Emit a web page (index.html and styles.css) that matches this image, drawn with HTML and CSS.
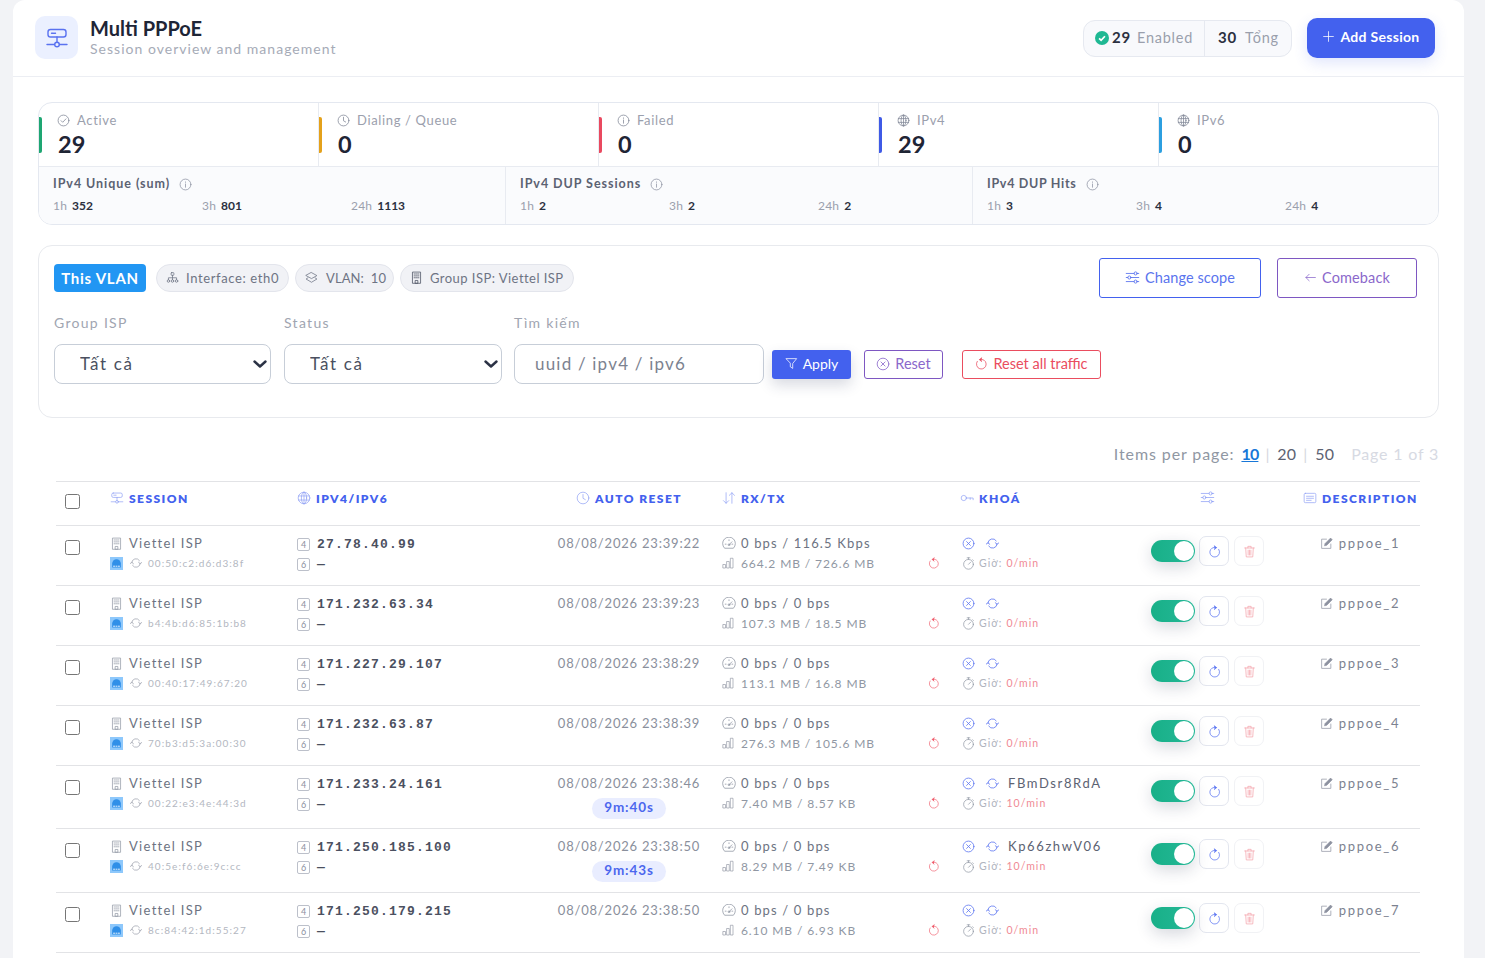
FILE: index.html
```html
<!DOCTYPE html>
<html>
<head>
	<meta charset="utf-8">
	<title>Multi PPPoE</title>
	<link rel="stylesheet" href="styles.css">
</head>
<body>
<svg class="sprite" xmlns="http://www.w3.org/2000/svg">
	<symbol id="i-net" viewBox="0 0 24 24"><rect x="3" y="3.5" width="18" height="7.5" rx="2.5"/><path d="M6.5 7.2h2M9.5 7.2h1M12 11v5M2 18.5h7.5M14.500 18.500H22"/><circle cx="12" cy="18.500" r="2.300"/></symbol>
	<symbol id="i-check" viewBox="0 0 24 24"><circle cx="12" cy="12" r="10"/><path d="M7.500 12.300l3 3 6-6.300"/></symbol>
	<symbol id="i-clock" viewBox="0 0 24 24"><circle cx="12" cy="12" r="10"/><path d="M12 6v6.500l4 2.300"/></symbol>
	<symbol id="i-info" viewBox="0 0 24 24"><circle cx="12" cy="12" r="10"/><path d="M12 11v6M12 7.200v.8"/></symbol>
	<symbol id="i-globe" viewBox="0 0 24 24"><circle cx="12" cy="12" r="10"/><ellipse cx="12" cy="12" rx="4.500" ry="10"/><path d="M2.500 8.500h19M2.500 15.500h19M12 2v20"/></symbol>
	<symbol id="i-x" viewBox="0 0 24 24"><circle cx="12" cy="12" r="10"/><path d="M8.500 8.500l7 7M15.500 8.500l-7 7"/></symbol>
	<symbol id="i-sync" viewBox="0 0 24 24"><path d="M3.500 11.500a8.500 8.500 0 0 1 15.500-4.300M20.500 12.500a8.500 8.500 0 0 1-15.500 4.300"/><path d="M17 10.500l3.500 3 3.500-3M0 13.500l3.500-3 3.500 3"/></symbol>
	<symbol id="i-sliders" viewBox="0 0 24 24"><path d="M2 5.500h12.500M19.500 5.500H22M2 12h2.500M9.500 12H22M2 18.500h12.500M19.500 18.500H22"/><circle cx="17" cy="5.500" r="2.500"/><circle cx="7" cy="12" r="2.500"/><circle cx="17" cy="18.500" r="2.500"/></symbol>
	<symbol id="i-back" viewBox="0 0 24 24"><path d="M21 12H3.500M9.500 6l-6 6 6 6"/></symbol>
	<symbol id="i-filter" viewBox="0 0 24 24"><path d="M2.500 3h19l-7.300 9v9l-4.400-3v-6z"/></symbol>
	<symbol id="i-rotate" viewBox="0 0 24 24"><path d="M8.500 4.700a9 9 0 1 1-4.300 3.300"/><path d="M12.500 1.500L8.300 4.800l3.700 3.700" fill="currentColor"/></symbol>
	<symbol id="i-redo" viewBox="0 0 24 24"><path d="M15.500 4.700a9 9 0 1 0 4.300 3.300"/><path d="M11.500 1.500l4.200 3.300-3.700 3.700" fill="currentColor"/></symbol>
	<symbol id="i-plus" viewBox="0 0 24 24"><path d="M12 3v18M3 12h18"/></symbol>
	<symbol id="i-build" viewBox="0 0 24 24"><path d="M4.500 22V2h15v20zM9.500 22v-4.500h5V22z"/><path d="M7.500 5.500h2M11 5.500h2M14.500 5.500h2M7.500 9h2M11 9h2M14.500 9h2M7.500 12.500h2M11 12.500h2M14.500 12.500h2"/></symbol>
	<symbol id="i-tree" viewBox="0 0 24 24"><rect x="9.500" y="3" width="5" height="5" rx="1"/><circle cx="4.500" cy="18.500" r="2.300"/><circle cx="12" cy="18.500" r="2.300"/><circle cx="19.500" cy="18.500" r="2.300"/><path d="M12 8v8M4.500 16v-3.500h15V16"/></symbol>
	<symbol id="i-layers" viewBox="0 0 24 24"><path d="M12 3l10 5.500-10 5.500L2 8.500z"/><path d="M5.500 12.500L2 14.800l10 6 10-6-3.500-2.300"/></symbol>
	<symbol id="i-sort" viewBox="0 0 24 24"><path d="M7 3v18M2.500 16.500L7 21l4.500-4.500M17 21V3M12.500 7.500L17 3l4.500 4.500"/></symbol>
	<symbol id="i-key" viewBox="0 0 24 24"><circle cx="6.500" cy="12" r="4.500"/><path d="M11 12h11.500v3M17.500 12v2.500"/></symbol>
	<symbol id="i-desc" viewBox="0 0 24 24"><rect x="2" y="4" width="20" height="16" rx="2"/><path d="M6 9h12M6 12.500h12M6 16h8"/></symbol>
	<symbol id="i-gauge" viewBox="0 0 24 20"><path d="M4 18.500a11 11 0 1 1 16 0z"/><path d="M12 13l5-5M5.500 12H7M17 12h1.500M12 4.500V6"/><circle cx="12" cy="13" r="1.500"/></symbol>
	<symbol id="i-bars" viewBox="0 0 24 24"><rect x="2.500" y="15" width="4.500" height="7"/><rect x="10" y="9" width="4.500" height="13"/><rect x="17.500" y="2.500" width="4.500" height="19.500"/></symbol>
	<symbol id="i-timer" viewBox="0 0 24 24"><circle cx="12" cy="13.500" r="9"/><path d="M12 13.500l4-4M9.500 1.500h5M12 1.500v3M19.500 5l1.500 1.500"/></symbol>
	<symbol id="i-trash" viewBox="0 0 24 24"><path d="M3 5.500h18M9 5.500V2.500h6v3M5 5.500l1 16.500h12l1-16.500M9.500 9.500v9M12 9.500v9M14.500 9.500v9"/></symbol>
	<symbol id="i-edit" viewBox="0 0 24 24"><path d="M20 13v8H3V4h9"/><path d="M8.500 15.500l1-3.500L19.500 2l3 3-10 10z" fill="currentColor"/></symbol>
	<symbol id="i-eth" viewBox="0 0 24 24"><rect class="eth-bg" x="0" y="0" width="24" height="24"/><path class="eth-fg" d="M4 19.500V12a8 8 0 0 1 16 0v7.500z"/><path class="eth-dot" d="M6.500 17h2M11 17h2M15.500 17h2"/></symbol>
	<symbol id="i-chev" viewBox="0 0 14 8"><path d="M1.500 1.500L7 6.500l5.500-5"/></symbol>
</svg>

<div class="page">
	<div class="topbar">
		<div class="brand">
			<div class="brand-icon"><svg class="ic ic-brand"><use href="#i-net"/></svg></div>
			<div>
				<div class="brand-title">Multi PPPoE</div>
				<div class="brand-sub">Session overview and management</div>
			</div>
		</div>
		<div class="top-actions">
			<div class="counter">
				<div class="counter-item">
					<span class="ok-dot"><svg viewBox="0 0 24 24"><path d="M7 12.500l3.500 3.500 6.500-7"/></svg></span>
					<b>29</b><span class="counter-label counter-enabled">Enabled</span>
				</div>
				<div class="counter-item counter-total"><b>30</b><span class="counter-label">Tổng</span></div>
			</div>
			<button class="btn-add"><svg class="ic ic-13"><use href="#i-plus"/></svg>Add Session</button>
		</div>
	</div>

	<div class="content">
		<div class="stats">
			<div class="stat-row">
				<div class="stat stat-green">
					<div class="stat-label"><svg class="ic ic-13"><use href="#i-check"/></svg>Active</div>
					<div class="stat-value">29</div>
				</div>
				<div class="stat stat-amber">
					<div class="stat-label"><svg class="ic ic-13"><use href="#i-clock"/></svg>Dialing / Queue</div>
					<div class="stat-value">0</div>
				</div>
				<div class="stat stat-red">
					<div class="stat-label"><svg class="ic ic-13"><use href="#i-info"/></svg>Failed</div>
					<div class="stat-value">0</div>
				</div>
				<div class="stat stat-blue">
					<div class="stat-label"><svg class="ic ic-13"><use href="#i-globe"/></svg>IPv4</div>
					<div class="stat-value">29</div>
				</div>
				<div class="stat stat-sky">
					<div class="stat-label"><svg class="ic ic-13"><use href="#i-globe"/></svg>IPv6</div>
					<div class="stat-value">0</div>
				</div>
			</div>
			<div class="dup-row">
				<div class="dup">
					<div class="dup-title">IPv4 Unique (sum)<svg class="ic ic-13"><use href="#i-info"/></svg></div>
					<div class="dup-vals">
						<span>1h<b>352</b></span><span>3h<b>801</b></span><span>24h<b>1113</b></span>
					</div>
				</div>
				<div class="dup">
					<div class="dup-title">IPv4 DUP Sessions<svg class="ic ic-13"><use href="#i-info"/></svg></div>
					<div class="dup-vals">
						<span>1h<b>2</b></span><span>3h<b>2</b></span><span>24h<b>2</b></span>
					</div>
				</div>
				<div class="dup">
					<div class="dup-title dup-hits">IPv4 DUP Hits<svg class="ic ic-13"><use href="#i-info"/></svg></div>
					<div class="dup-vals">
						<span>1h<b>3</b></span><span>3h<b>4</b></span><span>24h<b>4</b></span>
					</div>
				</div>
			</div>
		</div>

		<div class="filter">
			<div class="filter-top">
				<div class="chips">
					<span class="tag">This VLAN</span>
					<span class="chip chip-if"><svg class="ic ic-13"><use href="#i-tree"/></svg>Interface: eth0</span>
					<span class="chip chip-vlan"><svg class="ic ic-13"><use href="#i-layers"/></svg>VLAN:&nbsp; 10</span>
					<span class="chip chip-isp"><svg class="ic ic-13 ic-dark"><use href="#i-build"/></svg>Group ISP: Viettel ISP</span>
				</div>
				<div class="scope-btns">
					<button class="btn-line btn-scope"><svg class="ic ic-15"><use href="#i-sliders"/></svg>Change scope</button>
					<button class="btn-line btn-back"><svg class="ic ic-13"><use href="#i-back"/></svg>Comeback</button>
				</div>
			</div>
			<div class="filter-fields">
				<label class="field field-isp"><div class="field-label">Group ISP</div>
					<div class="select-wrap"><select><option>Tất cả</option></select><svg class="chev"><use href="#i-chev"/></svg></div>
				</label>
				<label class="field field-status"><div class="field-label">Status</div>
					<div class="select-wrap"><select><option>Tất cả</option></select><svg class="chev"><use href="#i-chev"/></svg></div>
				</label>
				<label class="field field-search"><div class="field-label">Tìm kiếm</div>
					<input type="text" placeholder="uuid / ipv4 / ipv6">
				</label>
				<button class="btn-apply"><svg class="ic ic-13"><use href="#i-filter"/></svg>Apply</button>
				<button class="btn-small btn-reset"><svg class="ic ic-14"><use href="#i-x"/></svg>Reset</button>
				<button class="btn-small btn-traffic"><svg class="ic ic-13"><use href="#i-rotate"/></svg>Reset all traffic</button>
			</div>
		</div>

		<div class="pager">
			<span>Items per page:</span><a class="pager-on">10</a><i>|</i><a>20</a><i>|</i><a>50</a><span class="pager-page">Page 1 of 3</span>
		</div>

		<table class="sessions">
			<colgroup>
				<col class="c-check"><col class="c-session"><col class="c-ip"><col class="c-reset"><col class="c-rate"><col class="c-key"><col class="c-act"><col class="c-desc">
			</colgroup>
			<thead>
				<tr>
					<th class="cell-check"><input type="checkbox"></th>
					<th class="th-session"><svg class="ic ic-14"><use href="#i-net"/></svg>Session</th>
					<th class="th-ip"><svg class="ic ic-14"><use href="#i-globe"/></svg>IPv4/IPv6</th>
					<th class="th-reset"><svg class="ic ic-14"><use href="#i-clock"/></svg>Auto reset</th>
					<th class="th-rate"><svg class="ic ic-14"><use href="#i-sort"/></svg>RX/TX</th>
					<th class="th-key"><svg class="ic ic-14"><use href="#i-key"/></svg>Khoá</th>
					<th class="th-act"><svg class="ic ic-15"><use href="#i-sliders"/></svg></th>
					<th class="th-desc"><svg class="ic ic-14"><use href="#i-desc"/></svg>Description</th>
				</tr>
			</thead>
			<tbody>
				<tr>
					<td class="cell-check"><input type="checkbox"></td>
					<td class="td-session"><div class="line isp"><svg class="ic ic-13"><use href="#i-build"/></svg>Viettel ISP</div><div class="line mac"><svg class="ic ic-13 eth"><use href="#i-eth"/></svg><svg class="ic ic-12"><use href="#i-sync"/></svg>00:50:c2:d6:d3:8f</div></td>
					<td class="td-ip"><div class="line ip"><span class="num">4</span>27.78.40.99</div><div class="line ip"><span class="num">6</span>—</div></td>
					<td class="td-reset"><div class="line">08/08/2026 23:39:22</div></td>
					<td class="td-rate"><div class="line"><svg class="ic ic-gauge"><use href="#i-gauge"/></svg>0 bps / 116.5 Kbps</div><div class="line line-sub"><svg class="ic ic-12"><use href="#i-bars"/></svg>664.2 MB / 726.6 MB<svg class="ic ic-12 ic-red"><use href="#i-rotate"/></svg></div></td>
					<td class="td-key"><div class="line"><svg class="ic ic-13 ic-blue"><use href="#i-x"/></svg><svg class="ic ic-13 ic-blue"><use href="#i-sync"/></svg></div><div class="line rate"><svg class="ic ic-13"><use href="#i-timer"/></svg>Giờ:<em>0/min</em></div></td>
					<td class="td-act"><div class="act"><span class="toggle"></span><span class="act-btn"><svg class="ic ic-13"><use href="#i-redo"/></svg></span><span class="act-btn act-del"><svg class="ic ic-13"><use href="#i-trash"/></svg></span></div></td>
					<td class="td-desc"><div class="line"><svg class="ic ic-13"><use href="#i-edit"/></svg>pppoe_1</div></td>
				</tr>
				<tr>
					<td class="cell-check"><input type="checkbox"></td>
					<td class="td-session"><div class="line isp"><svg class="ic ic-13"><use href="#i-build"/></svg>Viettel ISP</div><div class="line mac"><svg class="ic ic-13 eth"><use href="#i-eth"/></svg><svg class="ic ic-12"><use href="#i-sync"/></svg>b4:4b:d6:85:1b:b8</div></td>
					<td class="td-ip"><div class="line ip"><span class="num">4</span>171.232.63.34</div><div class="line ip"><span class="num">6</span>—</div></td>
					<td class="td-reset"><div class="line">08/08/2026 23:39:23</div></td>
					<td class="td-rate"><div class="line"><svg class="ic ic-gauge"><use href="#i-gauge"/></svg>0 bps / 0 bps</div><div class="line line-sub"><svg class="ic ic-12"><use href="#i-bars"/></svg>107.3 MB / 18.5 MB<svg class="ic ic-12 ic-red"><use href="#i-rotate"/></svg></div></td>
					<td class="td-key"><div class="line"><svg class="ic ic-13 ic-blue"><use href="#i-x"/></svg><svg class="ic ic-13 ic-blue"><use href="#i-sync"/></svg></div><div class="line rate"><svg class="ic ic-13"><use href="#i-timer"/></svg>Giờ:<em>0/min</em></div></td>
					<td class="td-act"><div class="act"><span class="toggle"></span><span class="act-btn"><svg class="ic ic-13"><use href="#i-redo"/></svg></span><span class="act-btn act-del"><svg class="ic ic-13"><use href="#i-trash"/></svg></span></div></td>
					<td class="td-desc"><div class="line"><svg class="ic ic-13"><use href="#i-edit"/></svg>pppoe_2</div></td>
				</tr>
				<tr>
					<td class="cell-check"><input type="checkbox"></td>
					<td class="td-session"><div class="line isp"><svg class="ic ic-13"><use href="#i-build"/></svg>Viettel ISP</div><div class="line mac"><svg class="ic ic-13 eth"><use href="#i-eth"/></svg><svg class="ic ic-12"><use href="#i-sync"/></svg>00:40:17:49:67:20</div></td>
					<td class="td-ip"><div class="line ip"><span class="num">4</span>171.227.29.107</div><div class="line ip"><span class="num">6</span>—</div></td>
					<td class="td-reset"><div class="line">08/08/2026 23:38:29</div></td>
					<td class="td-rate"><div class="line"><svg class="ic ic-gauge"><use href="#i-gauge"/></svg>0 bps / 0 bps</div><div class="line line-sub"><svg class="ic ic-12"><use href="#i-bars"/></svg>113.1 MB / 16.8 MB<svg class="ic ic-12 ic-red"><use href="#i-rotate"/></svg></div></td>
					<td class="td-key"><div class="line"><svg class="ic ic-13 ic-blue"><use href="#i-x"/></svg><svg class="ic ic-13 ic-blue"><use href="#i-sync"/></svg></div><div class="line rate"><svg class="ic ic-13"><use href="#i-timer"/></svg>Giờ:<em>0/min</em></div></td>
					<td class="td-act"><div class="act"><span class="toggle"></span><span class="act-btn"><svg class="ic ic-13"><use href="#i-redo"/></svg></span><span class="act-btn act-del"><svg class="ic ic-13"><use href="#i-trash"/></svg></span></div></td>
					<td class="td-desc"><div class="line"><svg class="ic ic-13"><use href="#i-edit"/></svg>pppoe_3</div></td>
				</tr>
				<tr>
					<td class="cell-check"><input type="checkbox"></td>
					<td class="td-session"><div class="line isp"><svg class="ic ic-13"><use href="#i-build"/></svg>Viettel ISP</div><div class="line mac"><svg class="ic ic-13 eth"><use href="#i-eth"/></svg><svg class="ic ic-12"><use href="#i-sync"/></svg>70:b3:d5:3a:00:30</div></td>
					<td class="td-ip"><div class="line ip"><span class="num">4</span>171.232.63.87</div><div class="line ip"><span class="num">6</span>—</div></td>
					<td class="td-reset"><div class="line">08/08/2026 23:38:39</div></td>
					<td class="td-rate"><div class="line"><svg class="ic ic-gauge"><use href="#i-gauge"/></svg>0 bps / 0 bps</div><div class="line line-sub"><svg class="ic ic-12"><use href="#i-bars"/></svg>276.3 MB / 105.6 MB<svg class="ic ic-12 ic-red"><use href="#i-rotate"/></svg></div></td>
					<td class="td-key"><div class="line"><svg class="ic ic-13 ic-blue"><use href="#i-x"/></svg><svg class="ic ic-13 ic-blue"><use href="#i-sync"/></svg></div><div class="line rate"><svg class="ic ic-13"><use href="#i-timer"/></svg>Giờ:<em>0/min</em></div></td>
					<td class="td-act"><div class="act"><span class="toggle"></span><span class="act-btn"><svg class="ic ic-13"><use href="#i-redo"/></svg></span><span class="act-btn act-del"><svg class="ic ic-13"><use href="#i-trash"/></svg></span></div></td>
					<td class="td-desc"><div class="line"><svg class="ic ic-13"><use href="#i-edit"/></svg>pppoe_4</div></td>
				</tr>
				<tr class="row-tall">
					<td class="cell-check"><input type="checkbox"></td>
					<td class="td-session"><div class="line isp"><svg class="ic ic-13"><use href="#i-build"/></svg>Viettel ISP</div><div class="line mac"><svg class="ic ic-13 eth"><use href="#i-eth"/></svg><svg class="ic ic-12"><use href="#i-sync"/></svg>00:22:e3:4e:44:3d</div></td>
					<td class="td-ip"><div class="line ip"><span class="num">4</span>171.233.24.161</div><div class="line ip"><span class="num">6</span>—</div></td>
					<td class="td-reset"><div class="line">08/08/2026 23:38:46</div><span class="countdown">9m:40s</span></td>
					<td class="td-rate"><div class="line"><svg class="ic ic-gauge"><use href="#i-gauge"/></svg>0 bps / 0 bps</div><div class="line line-sub"><svg class="ic ic-12"><use href="#i-bars"/></svg>7.40 MB / 8.57 KB<svg class="ic ic-12 ic-red"><use href="#i-rotate"/></svg></div></td>
					<td class="td-key"><div class="line"><svg class="ic ic-13 ic-blue"><use href="#i-x"/></svg><svg class="ic ic-13 ic-blue"><use href="#i-sync"/></svg><span class="key-val">FBmDsr8RdA</span></div><div class="line rate"><svg class="ic ic-13"><use href="#i-timer"/></svg>Giờ:<em>10/min</em></div></td>
					<td class="td-act"><div class="act"><span class="toggle"></span><span class="act-btn"><svg class="ic ic-13"><use href="#i-redo"/></svg></span><span class="act-btn act-del"><svg class="ic ic-13"><use href="#i-trash"/></svg></span></div></td>
					<td class="td-desc"><div class="line"><svg class="ic ic-13"><use href="#i-edit"/></svg>pppoe_5</div></td>
				</tr>
				<tr class="row-tall row-taller">
					<td class="cell-check"><input type="checkbox"></td>
					<td class="td-session"><div class="line isp"><svg class="ic ic-13"><use href="#i-build"/></svg>Viettel ISP</div><div class="line mac"><svg class="ic ic-13 eth"><use href="#i-eth"/></svg><svg class="ic ic-12"><use href="#i-sync"/></svg>40:5e:f6:6e:9c:cc</div></td>
					<td class="td-ip"><div class="line ip"><span class="num">4</span>171.250.185.100</div><div class="line ip"><span class="num">6</span>—</div></td>
					<td class="td-reset"><div class="line">08/08/2026 23:38:50</div><span class="countdown">9m:43s</span></td>
					<td class="td-rate"><div class="line"><svg class="ic ic-gauge"><use href="#i-gauge"/></svg>0 bps / 0 bps</div><div class="line line-sub"><svg class="ic ic-12"><use href="#i-bars"/></svg>8.29 MB / 7.49 KB<svg class="ic ic-12 ic-red"><use href="#i-rotate"/></svg></div></td>
					<td class="td-key"><div class="line"><svg class="ic ic-13 ic-blue"><use href="#i-x"/></svg><svg class="ic ic-13 ic-blue"><use href="#i-sync"/></svg><span class="key-val">Kp66zhwV06</span></div><div class="line rate"><svg class="ic ic-13"><use href="#i-timer"/></svg>Giờ:<em>10/min</em></div></td>
					<td class="td-act"><div class="act"><span class="toggle"></span><span class="act-btn"><svg class="ic ic-13"><use href="#i-redo"/></svg></span><span class="act-btn act-del"><svg class="ic ic-13"><use href="#i-trash"/></svg></span></div></td>
					<td class="td-desc"><div class="line"><svg class="ic ic-13"><use href="#i-edit"/></svg>pppoe_6</div></td>
				</tr>
				<tr>
					<td class="cell-check"><input type="checkbox"></td>
					<td class="td-session"><div class="line isp"><svg class="ic ic-13"><use href="#i-build"/></svg>Viettel ISP</div><div class="line mac"><svg class="ic ic-13 eth"><use href="#i-eth"/></svg><svg class="ic ic-12"><use href="#i-sync"/></svg>8c:84:42:1d:55:27</div></td>
					<td class="td-ip"><div class="line ip"><span class="num">4</span>171.250.179.215</div><div class="line ip"><span class="num">6</span>—</div></td>
					<td class="td-reset"><div class="line">08/08/2026 23:38:50</div></td>
					<td class="td-rate"><div class="line"><svg class="ic ic-gauge"><use href="#i-gauge"/></svg>0 bps / 0 bps</div><div class="line line-sub"><svg class="ic ic-12"><use href="#i-bars"/></svg>6.10 MB / 6.93 KB<svg class="ic ic-12 ic-red"><use href="#i-rotate"/></svg></div></td>
					<td class="td-key"><div class="line"><svg class="ic ic-13 ic-blue"><use href="#i-x"/></svg><svg class="ic ic-13 ic-blue"><use href="#i-sync"/></svg></div><div class="line rate"><svg class="ic ic-13"><use href="#i-timer"/></svg>Giờ:<em>0/min</em></div></td>
					<td class="td-act"><div class="act"><span class="toggle"></span><span class="act-btn"><svg class="ic ic-13"><use href="#i-redo"/></svg></span><span class="act-btn act-del"><svg class="ic ic-13"><use href="#i-trash"/></svg></span></div></td>
					<td class="td-desc"><div class="line"><svg class="ic ic-13"><use href="#i-edit"/></svg>pppoe_7</div></td>
				</tr>
			</tbody>
		</table>
	</div>
</div>
</body>
</html>
```

FILE: styles.css
```css
html, body {
	margin: 0;
	height: 100vh;
	overflow: hidden;
}
body {
	background: #f2f3f6;
	font-family: "Lato", "Noto Sans", sans-serif;
	color: #2b3040;
}
.sprite {
	display: none;
}
.ic {
	fill: none;
	stroke: currentColor;
	stroke-width: 1.4;
	stroke-linecap: round;
	stroke-linejoin: round;
	flex: none;
}
.ic-12 { width: 12px; height: 12px; }
.ic-13 { width: 13px; height: 13px; }
.ic-14 { width: 14px; height: 14px; }
.ic-15 { width: 15px; height: 15px; }
.ic-gauge { width: 14px; height: 12px; }
.ic-brand { width: 24px; height: 24px; color: #5a72f0; }
.ic-dark { color: #4a5060; }
.ic-blue { color: #5f78f2; }
.ic-red { color: #ef5b6b; }

.page {
	margin: 0 21px 0 13px;
	min-height: 100%;
	background: #fff;
	border-radius: 12px 12px 0 0;
}

/* top bar */
.topbar {
	display: flex;
	justify-content: space-between;
	align-items: center;
	height: 76px;
	padding: 0 29px 0 22px;
	border-bottom: 1px solid #eceef3;
}
.brand {
	display: flex;
	align-items: center;
	gap: 12px;
}
.brand-icon {
	width: 43px;
	height: 43px;
	margin-top: -1px;
	border-radius: 10px;
	background: #ebf0ff;
	display: flex;
	align-items: center;
	justify-content: center;
}
.brand-title {
	font-size: 20px;
	line-height: 24px;
	margin-top: -2px;
	font-weight: 700;
	letter-spacing: 0;
	color: #1e2536;
}
.brand-sub {
	font-size: 14px;
	line-height: 18px;
	letter-spacing: 1.02px;
	color: #a6abb7;
}
.top-actions {
	display: flex;
	align-items: center;
	gap: 15px;
}
.counter {
	display: flex;
	height: 35px;
	border: 1px solid #e6e9f0;
	border-radius: 12px;
	background: #f8f9fc;
	font-size: 15px;
}
.counter-item {
	display: flex;
	align-items: center;
	padding: 0 11px 2px;
	width: 98px;
}
.counter-item b {
	font-weight: 700;
	letter-spacing: 0.8px;
	color: #2b3040;
}
.counter-total {
	border-left: 1px solid #e6e9f0;
	padding: 0 12px 2px 13px;
	width: 61px;
}
.counter-label {
	margin-left: 8px;
	color: #9a9fac;
	font-size: 14.500px;
	letter-spacing: 0.75px;
}
.counter-enabled {
	margin-left: 6px;
}
.ok-dot {
	width: 14px;
	height: 14px;
	border-radius: 50%;
	background: #1fb893;
	margin: 2px 3px 0 0;
	display: flex;
}
.ok-dot svg {
	fill: none;
	stroke: #fff;
	stroke-width: 3;
}
.btn-add {
	width: 128px;
	height: 40px;
	padding: 0 0 3px;
	border: 0;
	border-radius: 10px;
	background: #4361ee;
	color: #fff;
	font: 700 14px "Lato", sans-serif;
	letter-spacing: 0.3px;
	display: flex;
	align-items: center;
	justify-content: center;
	gap: 5px;
	box-shadow: 0 5px 14px rgba(67, 97, 238, 0.16);
}

.content {
	padding: 25px 25px 0;
}

/* stat cards */
.stats {
	border: 1px solid #e4e8f0;
	border-radius: 14px;
	overflow: hidden;
	box-sizing: border-box;
	height: 123px;
}
.stat-row {
	display: grid;
	grid-template-columns: repeat(5, 280px);
	height: 63px;
	border-bottom: 1px solid #e8ebf1;
}
.stat {
	padding: 8px 0 0 18px;
	box-sizing: border-box;
	height: 63px;
	position: relative;
	box-shadow: -1px 0 0 #e8ebf1;
}
.stat:first-child {
	box-shadow: none;
}
.stat::before {
	content: "";
	position: absolute;
	left: 0;
	top: 14px;
	width: 3px;
	height: 36px;
	border-radius: 0 2px 2px 0;
}
.stat-green::before { background: #1ea672; }
.stat-amber::before { background: #e4a11b; }
.stat-red::before { background: #e9495f; }
.stat-blue::before { background: #3f5ae6; }
.stat-sky::before { background: #2c9fe0; }
.stat-label {
	display: flex;
	align-items: center;
	gap: 7px;
	font-size: 13px;
	line-height: 18px;
	letter-spacing: 0.65px;
	color: #9ba0ad;
}
.stat-label .ic {
	color: #7f8595;
	stroke-width: 1.4;
}
.stat-value {
	font-size: 23.500px;
	line-height: 28px;
	margin: 1px 0 0 1px;
	font-weight: 700;
	color: #1f2535;
}
.dup-row {
	display: grid;
	grid-template-columns: 466px 467px 1fr;
	height: 58px;
	background: #fafbfd;
}
.dup {
	padding: 8px 14px 0;
	border-left: 1px solid #e8ebf1;
}
.dup:first-child {
	border-left: 0;
}
.dup-title {
	display: flex;
	align-items: center;
	gap: 9px;
	font-size: 12.500px;
	line-height: 18px;
	font-weight: 700;
	letter-spacing: 0.95px;
	color: #5c6272;
}
.dup-hits {
	letter-spacing: 0.7px;
}
.dup-title .ic {
	color: #8d93a2;
	stroke-width: 1.4;
}
.dup-vals {
	display: grid;
	grid-template-columns: repeat(3, 149px);
	margin-top: 4px;
	font-size: 12px;
	line-height: 18px;
	letter-spacing: 0.2px;
	color: #9ba0ad;
}
.dup-vals b {
	margin-left: 5px;
	color: #2b3040;
	font-weight: 700;
	letter-spacing: 0;
}

/* filter card */
.filter {
	margin-top: 20px;
	height: 173px;
	box-sizing: border-box;
	border: 1px solid #e8eaee;
	border-radius: 14px;
	padding: 12px 21px 0 15px;
}
.filter-top {
	display: flex;
	justify-content: space-between;
	align-items: center;
	height: 40px;
}
.chips {
	display: flex;
	align-items: center;
	gap: 6px;
}
.tag {
	width: 92px;
	height: 28px;
	margin-right: 4px;
	padding-bottom: 1px;
	box-sizing: border-box;
	border-radius: 4px;
	background: #2196f3;
	color: #fff;
	font-size: 15px;
	font-weight: 700;
	letter-spacing: 0.75px;
	display: flex;
	align-items: center;
	justify-content: center;
}
.chip {
	height: 28px;
	box-sizing: border-box;
	padding: 0 0 1px 9px;
	display: flex;
	align-items: center;
	gap: 7px;
	border: 1px solid #e3e5ec;
	border-radius: 14px;
	background: #f1f2f6;
	font-size: 13px;
	letter-spacing: 0.5px;
	color: #6e7484;
	white-space: nowrap;
}
.chip-if { width: 133px; letter-spacing: 0.63px; }
.chip-vlan { width: 99px; gap: 8px; letter-spacing: 0.1px; }
.chip-isp { width: 174px; letter-spacing: 0.46px; }
.scope-btns {
	display: flex;
	gap: 16px;
}
.btn-line {
	height: 40px;
	padding: 0 0 2px;
	background: #fff;
	border-radius: 3px;
	font: 400 14.500px "Lato", sans-serif;
	letter-spacing: 0.1px;
	display: flex;
	align-items: center;
	justify-content: center;
	gap: 5px;
}
.btn-scope {
	width: 162px;
	border: 1px solid #4361ee;
	color: #5a74ee;
}
.btn-back {
	width: 140px;
	border: 1px solid #7e57c2;
	color: #8b68cb;
}
.filter-fields {
	display: flex;
	align-items: flex-end;
	margin-top: 15px;
}
.field {
	display: block;
	margin-right: 13px;
}
.field-label {
	height: 20px;
	margin-bottom: 11px;
	font-size: 14px;
	line-height: 20px;
	letter-spacing: 1.3px;
	color: #a0a5b1;
}
.select-wrap {
	position: relative;
}
.chev {
	position: absolute;
	right: 4px;
	top: 16px;
	width: 14px;
	height: 8px;
	fill: none;
	stroke: #2b3245;
	stroke-width: 2.4;
	stroke-linecap: round;
	stroke-linejoin: round;
	pointer-events: none;
}
.field select, .field input {
	display: block;
	width: 100%;
	height: 40px;
	box-sizing: border-box;
	background: #fff;
	border: 1px solid #c7ced8;
	border-radius: 8px;
	font: 400 17px "Lato", sans-serif;
	letter-spacing: 1.2px;
	color: #4a5060;
}
.field select {
	appearance: none;
	padding: 0 0 2px 25px;
	letter-spacing: 1.65px;
}
.field input {
	padding: 0 0 2px 20px;
	outline: 0;
}
.field input::placeholder {
	color: #7c8290;
}
.field-isp { width: 217px; }
.field-status { width: 218px; margin-right: 12px; }
.field-search { width: 250px; margin-right: 8px; }
.btn-apply {
	width: 79px;
	height: 29px;
	margin-bottom: 5px;
	margin-right: 13px;
	padding: 0 0 2px;
	border: 0;
	border-radius: 3px;
	background: #4361ee;
	color: #fff;
	font: 400 14px "Lato", sans-serif;
	display: flex;
	align-items: center;
	justify-content: center;
	gap: 5px;
	box-shadow: 0 6px 14px rgba(40, 50, 90, 0.18);
}
.btn-small {
	height: 29px;
	margin-bottom: 5px;
	padding: 0 0 2px;
	background: #fff;
	border-radius: 3px;
	font: 400 14.500px "Lato", sans-serif;
	display: flex;
	align-items: center;
	justify-content: center;
	gap: 5px;
}
.btn-reset {
	width: 79px;
	margin-right: 19px;
	border: 1px solid #7e57c2;
	color: #8b68cb;
}
.btn-traffic {
	width: 139px;
	border: 1px solid #ea4d5f;
	color: #ea4d5f;
}

/* pager */
.pager {
	margin-top: 25px;
	height: 20px;
	display: flex;
	justify-content: flex-end;
	align-items: center;
	font-size: 16px;
	letter-spacing: 0.9px;
	color: #9097a3;
}
.pager a {
	color: #5c6272;
	letter-spacing: 0.2px;
}
.pager i {
	font-style: normal;
	color: #d5d8e0;
	margin: 0 7px;
}
.pager .pager-on {
	margin-left: 7px;
	color: #1877d8;
	font-weight: 700;
	letter-spacing: -0.8px;
	text-decoration: underline;
}
.pager-page {
	margin-left: 17px;
	color: #d7dae3;
	letter-spacing: 0.8px;
}

/* table */
.sessions {
	margin: 18px 0 0 18px;
	width: 1364px;
	table-layout: fixed;
	border-collapse: collapse;
	border-top: 1px solid #e2e3e6;
}
.c-check { width: 45px; }
.c-session { width: 187px; }
.c-ip { width: 261px; }
.c-reset { width: 160px; }
.c-rate { width: 242px; }
.c-key { width: 189px; }
.c-act { width: 163px; }
.c-desc { width: 117px; }
.sessions input[type="checkbox"] {
	display: block;
	width: 15px;
	height: 15px;
	margin: 0 0 0 9px;
}
.sessions th {
	height: 44px;
	padding: 8px 0 0;
	box-sizing: border-box;
	vertical-align: top;
	text-align: left;
	font-size: 12px;
	line-height: 18px;
	font-weight: 800;
	letter-spacing: 1.45px;
	text-transform: uppercase;
	color: #4361ee;
	border-bottom: 1px solid #e2e3e6;
	white-space: nowrap;
}
.sessions th .ic {
	color: #8fa0f5;
	margin-right: 5px;
	vertical-align: -2px;
	stroke-width: 1.2;
}
.sessions th.cell-check {
	padding-top: 12px;
}
.sessions td {
	height: 60px;
	padding: 8px 0 0;
	box-sizing: border-box;
	vertical-align: top;
	border-bottom: 1px solid #e2e3e6;
}
.sessions td.cell-check {
	padding-top: 14px;
}
.sessions .row-tall td {
	height: 63px;
}
.sessions .row-taller td {
	height: 64px;
}
.th-session { padding-left: 9px !important; }
.th-ip { padding-left: 9px !important; }
.th-reset { padding-left: 27px !important; }
.th-rate { padding-left: 13px !important; }
.th-key { padding-left: 9px !important; }
.th-act { padding: 8px 0 0 60px !important; }

.line {
	display: flex;
	align-items: center;
	height: 20px;
	padding-bottom: 2px;
	box-sizing: border-box;
	font-size: 13px;
	letter-spacing: 1.15px;
	color: #6d7382;
	white-space: nowrap;
}
.line .ic {
	color: #8f95a3;
	stroke-width: 1.3;
}
.td-session {
	padding-left: 9px !important;
}
.isp {
	letter-spacing: 1.3px;
}
.isp .ic {
	margin-right: 6px;
}
.mac {
	font-size: 10px;
	letter-spacing: 1.05px;
	color: #b3b7c1;
}
.mac .ic {
	margin-right: 6px;
}
.mac .eth {
	margin-right: 7px;
}
.eth-bg { fill: #8ec8fb; stroke: none; }
.eth-fg { fill: #2f8fe8; stroke: none; }
.eth-dot { stroke: #fff; stroke-width: 1.600; }

.td-ip {
	padding-left: 9px !important;
}
.ip {
	padding-bottom: 0;
	font-family: "Liberation Mono", monospace;
	font-size: 13px;
	font-weight: 700;
	letter-spacing: 1.2px;
	color: #4b5060;
}
.num {
	width: 11px;
	height: 11px;
	margin-right: 7px;
	border: 1px solid #bcc0ca;
	border-radius: 2px;
	font: 400 9px/11px "Lato", sans-serif;
	letter-spacing: 0;
	text-align: center;
	color: #8c91a0;
}
.td-reset .line {
	justify-content: center;
	letter-spacing: 0.8px;
	color: #8a8f9c;
	font-size: 13px;
}
.countdown {
	display: block;
	width: 74px;
	height: 21px;
	margin: 4px auto 0;
	padding-bottom: 2px;
	box-sizing: border-box;
	border-radius: 11px;
	background: #e9edff;
	font-size: 13.500px;
	line-height: 19px;
	font-weight: 700;
	letter-spacing: 0.9px;
	text-align: center;
	color: #4c67ee;
}
.td-rate {
	padding-left: 13px !important;
}
.td-rate .line .ic:first-child {
	margin-right: 5px;
}
.td-rate .line-sub .ic:first-child {
	margin-right: 7px;
}
.line-sub {
	width: 218px;
	font-size: 12px;
	letter-spacing: 0.9px;
	color: #9097a3;
}
.line-sub .ic-red {
	margin-left: auto;
	color: #ef5b6b;
}
.td-key {
	padding-left: 11px !important;
}
.td-key .line .ic-blue {
	color: #5f78f2;
	margin-right: 11px;
	stroke-width: 1.5;
}
.key-val {
	margin-left: -2px;
	color: #5c6272;
	letter-spacing: 1.6px;
}
.rate {
	padding-left: 0;
	font-size: 10.500px;
	letter-spacing: 1.05px;
	color: #b0b4be;
}
.rate .ic {
	margin-right: 4px;
}
.rate em {
	margin-left: 4px;
	font-style: normal;
	color: #f08a95;
}
.td-act {
	padding: 10px 0 0 11px !important;
}
.act {
	display: flex;
	align-items: center;
	gap: 5px;
}
.toggle {
	width: 44px;
	height: 22px;
	margin-right: -1px;
	border-radius: 11px;
	background: linear-gradient(90deg, #18b088, #25b897);
	position: relative;
	box-shadow: 0 5px 16px rgba(30, 40, 70, 0.18);
}
.toggle::after {
	content: "";
	position: absolute;
	right: 1px;
	top: 1px;
	width: 20px;
	height: 20px;
	border-radius: 50%;
	background: #fff;
}
.act-btn {
	width: 30px;
	height: 30px;
	box-sizing: border-box;
	display: flex;
	align-items: center;
	justify-content: center;
	border: 1px solid #e3e6ef;
	border-radius: 7px;
	background: #fff;
	color: #5f78f2;
}
.act-del {
	border-color: #f1f2f5;
	color: #f5a5ad;
}
.td-desc .line {
	justify-content: center;
	padding-right: 3px;
	letter-spacing: 1.7px;
	color: #7c8290;
}
.td-desc .ic {
	margin-right: 6px;
	color: #8d92a0;
}
```
